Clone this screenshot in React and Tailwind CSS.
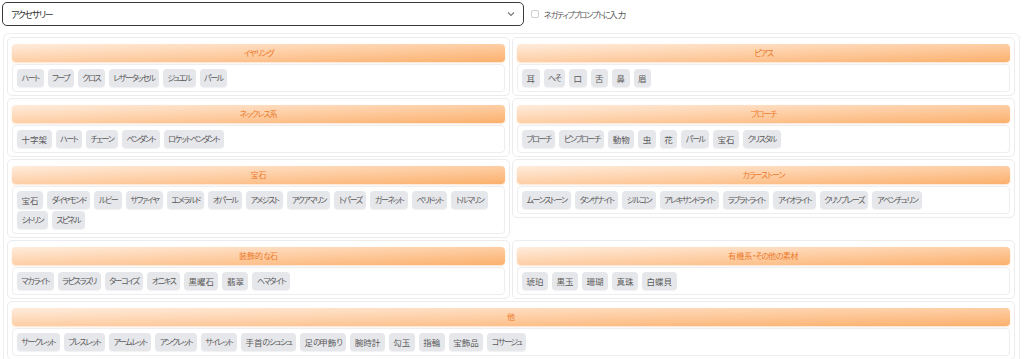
const groups = [
  { title: "イヤリング", tags: ["ハート", "フープ", "クロス", "レザータッセル", "ジュエル", "パール"] },
  { title: "ピアス", tags: ["耳", "へそ", "口", "舌", "鼻", "眉"] },
  { title: "ネックレス系", tags: ["十字架", "ハート", "チェーン", "ペンダント", "ロケットペンダント"] },
  { title: "ブローチ", tags: ["ブローチ", "ピンブローチ", "動物", "虫", "花", "パール", "宝石", "クリスタル"] },
  {
    title: "宝石",
    tags: ["宝石", "ダイヤモンド", "ルビー", "サファイヤ", "エメラルド", "オパール", "アメジスト", "アクアマリン", "トパーズ", "ガーネット", "ペリドット", "トルマリン", "シトリン", "スピネル"],
  },
  { title: "カラーストーン", tags: ["ムーンストーン", "タンザナイト", "ジルコン", "アレキサンドライト", "ラブラトライト", "アイオライト", "クリソプレーズ", "アベンチュリン"] },
  { title: "装飾的な石", tags: ["マカライト", "ラピスラズリ", "ターコイズ", "オニキス", "黒曜石", "翡翠", "ヘマタイト"] },
  { title: "有機系・その他の素材", tags: ["琥珀", "黒玉", "珊瑚", "真珠", "白蝶貝"] },
  {
    title: "他",
    wide: true,
    tags: ["サークレット", "ブレスレット", "アームレット", "アンクレット", "サイレット", "手首のシュシュ", "足の甲飾り", "腕時計", "勾玉", "指輪", "宝飾品", "コサージュ"],
  },
];

// kana in the original UI font are narrow, kanji are full width
function Jp({ text, kana }) {
  return text.split(/([\u3040-\u30ff]+)/).map((part, i) =>
    /^[\u3040-\u30ff]+$/.test(part) ? (
      <span key={i} className={kana}>
        {part}
      </span>
    ) : (
      <span key={i}>{part}</span>
    )
  );
}

function Card({ group }) {
  return (
    <div
      className={
        "border border-[#ececef] rounded-[5px] bg-white px-[4px] pt-[6px] pb-[3px] " +
        (group.wide ? "col-span-2" : "")
      }
    >
      <div className="h-[18px] rounded-[4px] bg-linear-to-br from-[#feecdc] to-[#fbb06b] shadow-[0_1px_2px_rgba(240,140,60,0.25)] flex items-center justify-center text-[8px] text-[#ec7a2c]">
        <Jp text={group.title} kana="tracking-[-1.1px]" />
      </div>
      <div className="mt-[2px] border border-[#eeeef0] rounded-[4px] p-[4px] flex flex-wrap gap-x-[4px] gap-y-[2px]">
        {group.tags.map((t, i) => (
          <span
            key={i}
            className="h-[18px] px-[4.5px] rounded-[4px] bg-[#e6e7eb] shadow-[0_1px_1px_rgba(0,0,0,0.06)] flex items-center text-[8.5px] text-[#5a5a5a] leading-none whitespace-nowrap"
          >
            <Jp text={t} kana="text-[8px] tracking-[-1.4px]" />
          </span>
        ))}
      </div>
    </div>
  );
}

export default function App() {
  return (
    <div
      className="w-[1024px] h-[359px] overflow-hidden bg-white [font-feature-settings:'palt']"
      style={{ fontFamily: "'Noto Sans CJK JP', 'Noto Sans', sans-serif" }}
    >
      {/* select row */}
      <div className="flex items-center pl-[2px] pt-[2px] h-[26px]">
        <div className="w-[522px] h-[24px] border border-[#3a3a3a] rounded-[5px] flex items-center justify-between pl-[8px] pr-[8px] text-[9.5px] text-[#333]">
          <span>
            <Jp text="アクセサリー" kana="text-[9px] tracking-[-1.3px]" />
          </span>
          <svg width="8" height="6" viewBox="0 0 8 6" fill="none">
            <polyline points="1,1.5 4,4.5 7,1.5" stroke="#777" strokeWidth="1.2" />
          </svg>
        </div>
        <div className="ml-[7px] flex items-center gap-[5px]">
          <span className="w-[8px] h-[8px] border border-[#cfcfcf] rounded-[2px] bg-white" />
          <span className="text-[8.5px] text-[#555]">
            <Jp text="ネガティブプロンプトに入力" kana="text-[8px] tracking-[-1.2px]" />
          </span>
        </div>
      </div>

      {/* categories */}
      <div className="ml-[3px] mt-[7px] w-[1017px] border border-[#eeeef0] rounded-[6px] pl-[3px] pr-[4px] pt-[3px] pb-[3px]">
        <div className="grid grid-cols-2 gap-[2px] items-start">
          {groups.map((g, i) => (
            <Card key={i} group={g} />
          ))}
        </div>
      </div>
    </div>
  );
}
